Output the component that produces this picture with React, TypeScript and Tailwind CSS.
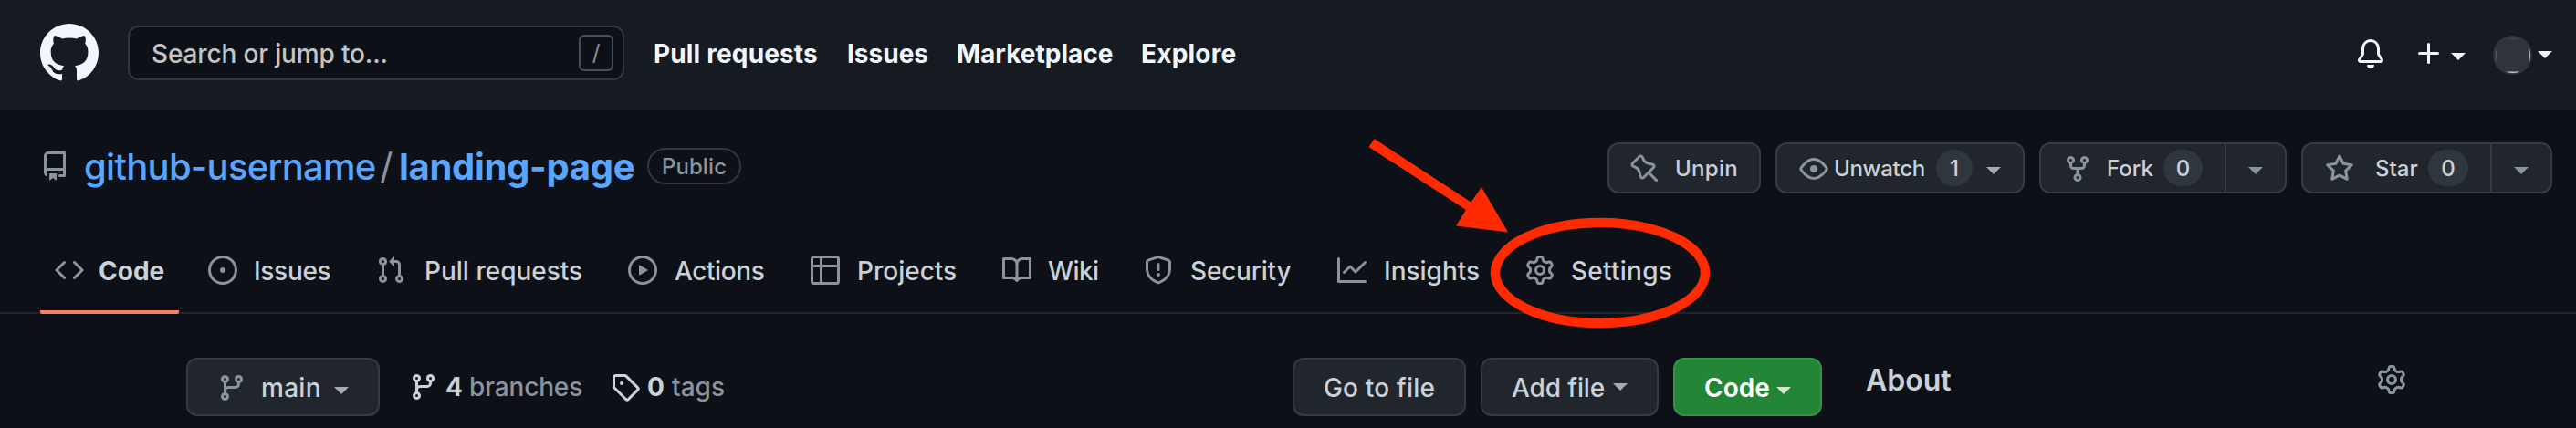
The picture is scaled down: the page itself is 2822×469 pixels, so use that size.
import React from "react";

const PATHS = {
  mark: "M8 0C3.58 0 0 3.58 0 8c0 3.54 2.29 6.53 5.47 7.59.4.07.55-.17.55-.38 0-.19-.01-.82-.01-1.49-2.01.37-2.53-.49-2.69-.94-.09-.23-.48-.94-.82-1.13-.28-.15-.68-.52-.01-.53.63-.01 1.08.58 1.23.82.72 1.21 1.87.87 2.33.66.07-.52.28-.87.51-1.07-1.78-.2-3.64-.89-3.64-3.95 0-.87.31-1.59.82-2.15-.08-.2-.36-1.02.08-2.12 0 0 .67-.21 2.2.82.64-.18 1.32-.27 2-.27.68 0 1.36.09 2 .27 1.53-1.04 2.2-.82 2.2-.82.44 1.1.16 1.92.08 2.12.51.56.82 1.27.82 2.15 0 3.07-1.87 3.75-3.65 3.95.29.25.54.73.54 1.48 0 1.07-.01 1.93-.01 2.2 0 .21.15.46.55.38A8.013 8.013 0 0016 8c0-4.42-3.58-8-8-8z",
  bell: "M8 16a2 2 0 001.985-1.75c.017-.137-.097-.25-.235-.25h-3.5c-.138 0-.252.113-.235.25A2 2 0 008 16zM3 5a5 5 0 0110 0v2.947c0 .05.015.098.042.139l1.703 2.555A1.518 1.518 0 0113.482 13H2.518a1.518 1.518 0 01-1.263-2.36l1.703-2.554A.25.25 0 003 7.947V5zm5-3.5A3.5 3.5 0 004.5 5v2.947c0 .346-.102.683-.294.97l-1.703 2.556a.018.018 0 00-.003.01l.001.006c0 .002.002.004.004.006a.017.017 0 00.006.004l.007.001h10.964l.007-.001a.016.016 0 00.006-.004.016.016 0 00.004-.006l.001-.007a.017.017 0 00-.003-.01l-1.703-2.554a1.75 1.75 0 01-.294-.97V5A3.5 3.5 0 008 1.5z",
  plus: "M7.75 2a.75.75 0 01.75.75V7h4.25a.75.75 0 110 1.5H8.5v4.25a.75.75 0 11-1.5 0V8.5H2.75a.75.75 0 010-1.5H7V2.75A.75.75 0 017.75 2z",
  repo: "M2 2.5A2.5 2.5 0 014.5 0h8.75a.75.75 0 01.75.75v12.5a.75.75 0 01-.75.75h-2.5a.75.75 0 110-1.5h1.75v-2h-8a1 1 0 00-.714 1.7.75.75 0 01-1.072 1.05A2.495 2.495 0 012 11.5v-9zm10.5-1V9h-8c-.356 0-.694.074-1 .208V2.5a1 1 0 011-1h8zM5 12.25v3.25a.25.25 0 00.4.2l1.45-1.087a.25.25 0 01.3 0L8.6 15.7a.25.25 0 00.4-.2v-3.25a.25.25 0 00-.25-.25h-3.5a.25.25 0 00-.25.25z",
  pin: "M4.456.734a1.75 1.75 0 012.826.504l.613 1.327a3.081 3.081 0 002.084 1.707l2.454.584c1.332.317 1.8 1.972.832 2.94L11.06 10l3.72 3.72a.75.75 0 11-1.061 1.06L10 11.06l-2.204 2.205c-.968.968-2.623.5-2.94-.832l-.584-2.454a3.081 3.081 0 00-1.707-2.084l-1.327-.613a1.75 1.75 0 01-.504-2.826L4.456.734zM5.92 1.866a.25.25 0 00-.404-.072L1.794 5.516a.25.25 0 00.072.404l1.328.613A4.582 4.582 0 015.73 9.63l.584 2.454a.25.25 0 00.42.12l5.47-5.47a.25.25 0 00-.12-.42L9.63 5.73a4.581 4.581 0 01-3.098-2.537L5.92 1.866z",
  eye: "M1.679 7.932c.412-.621 1.242-1.75 2.366-2.717C5.175 4.242 6.527 3.5 8 3.5c1.473 0 2.824.742 3.955 1.715 1.124.967 1.954 2.096 2.366 2.717a.119.119 0 010 .136c-.412.621-1.242 1.75-2.366 2.717C10.825 11.758 9.473 12.5 8 12.5c-1.473 0-2.824-.742-3.955-1.715C2.92 9.818 2.09 8.69 1.679 8.068a.119.119 0 010-.136zM8 2c-1.981 0-3.67.992-4.933 2.078C1.797 5.169.88 6.423.43 7.1a1.619 1.619 0 000 1.798c.45.678 1.367 1.932 2.637 3.024C4.329 13.008 6.019 14 8 14c1.981 0 3.67-.992 4.933-2.078 1.27-1.091 2.187-2.345 2.637-3.023a1.619 1.619 0 000-1.798c-.45-.678-1.367-1.932-2.637-3.023C11.671 2.992 9.981 2 8 2zm0 8a2 2 0 100-4 2 2 0 000 4z",
  fork: "M5 3.25a.75.75 0 11-1.5 0 .75.75 0 011.5 0zm0 2.122a2.25 2.25 0 10-1.5 0v.878A2.25 2.25 0 005.75 8.5h1.5v2.128a2.251 2.251 0 101.5 0V8.5h1.5a2.25 2.25 0 002.25-2.25v-.878a2.25 2.25 0 10-1.5 0v.878a.75.75 0 01-.75.75h-4.5A.75.75 0 015 6.25v-.878zm3.75 7.378a.75.75 0 11-1.5 0 .75.75 0 011.5 0zm3-8.75a.75.75 0 100-1.5.75.75 0 000 1.5z",
  star: "M8 .25a.75.75 0 01.673.418l1.882 3.815 4.21.612a.75.75 0 01.416 1.279l-3.046 2.97.719 4.192a.75.75 0 01-1.088.791L8 12.347l-3.766 1.98a.75.75 0 01-1.088-.79l.72-4.194L.818 6.374a.75.75 0 01.416-1.28l4.21-.611L7.327.668A.75.75 0 018 .25zm0 2.445L6.615 5.5a.75.75 0 01-.564.41l-3.097.45 2.24 2.184a.75.75 0 01.216.664l-.528 3.084 2.769-1.456a.75.75 0 01.698 0l2.77 1.456-.53-3.084a.75.75 0 01.216-.664l2.24-2.183-3.096-.45a.75.75 0 01-.564-.41L8 2.694v.001z",
  code: "M4.72 3.22a.75.75 0 011.06 1.06L2.06 8l3.72 3.72a.75.75 0 11-1.06 1.06L.47 8.53a.75.75 0 010-1.06l4.25-4.25zm6.56 0a.75.75 0 10-1.06 1.06L13.94 8l-3.72 3.72a.75.75 0 101.06 1.06l4.25-4.25a.75.75 0 000-1.06l-4.25-4.25z",
  issue: "M8 9.5a1.5 1.5 0 100-3 1.5 1.5 0 000 3zM8 0a8 8 0 100 16A8 8 0 008 0zM1.5 8a6.5 6.5 0 1113 0 6.5 6.5 0 01-13 0z",
  pull: "M7.177 3.073L9.573.677A.25.25 0 0110 .854v4.792a.25.25 0 01-.427.177L7.177 3.427a.25.25 0 010-.354zM3.75 2.5a.75.75 0 100 1.5.75.75 0 000-1.5zm-2.25.75a2.25 2.25 0 113 2.122v5.256a2.251 2.251 0 11-1.5 0V5.372A2.25 2.25 0 011.5 3.25zM11 2.5h-1V4h1a1 1 0 011 1v5.628a2.251 2.251 0 101.5 0V5A2.5 2.5 0 0011 2.5zm1 10.25a.75.75 0 111.5 0 .75.75 0 01-1.5 0zM3.75 12a.75.75 0 100 1.5.75.75 0 000-1.5z",
  play: "M1.5 8a6.5 6.5 0 1113 0 6.5 6.5 0 01-13 0zM8 0a8 8 0 100 16A8 8 0 008 0zM6.379 5.227A.25.25 0 006 5.442v5.117a.25.25 0 00.379.214l4.264-2.559a.25.25 0 000-.428L6.379 5.227z",
  table: "M0 1.75C0 .784.784 0 1.75 0h12.5C15.216 0 16 .784 16 1.75v12.5A1.75 1.75 0 0114.25 16H1.75A1.75 1.75 0 010 14.25V1.75zM1.5 6.5v7.75c0 .138.112.25.25.25H5v-8H1.5zM5 5H1.5V1.75a.25.25 0 01.25-.25H5V5zm1.5 1.5v8h7.75a.25.25 0 00.25-.25V6.5h-8zm8-1.5h-8V1.5h7.75a.25.25 0 01.25.25V5z",
  book: "M0 1.75A.75.75 0 01.75 1h4.253c1.227 0 2.317.59 3 1.501A3.744 3.744 0 0111.006 1h4.245a.75.75 0 01.75.75v10.5a.75.75 0 01-.75.75h-4.507a2.25 2.25 0 00-1.591.659l-.622.621a.75.75 0 01-1.06 0l-.622-.621A2.25 2.25 0 005.258 13H.75a.75.75 0 01-.75-.75V1.75zm8.755 3a2.25 2.25 0 012.25-2.25H14.5v9h-3.757c-.71 0-1.4.201-1.992.572l.004-7.322zm-1.504 7.324l.004-5.073-.002-2.253A2.25 2.25 0 005.003 2.5H1.5v9h3.757a3.75 3.75 0 011.994.574z",
  shield: "M7.467.133a1.75 1.75 0 011.066 0l5.25 1.68A1.75 1.75 0 0115 3.48V7c0 1.566-.32 3.182-1.303 4.682-.983 1.498-2.585 2.813-5.032 3.855a1.7 1.7 0 01-1.33 0c-2.447-1.042-4.049-2.357-5.032-3.855C1.32 10.182 1 8.566 1 7V3.48a1.75 1.75 0 011.217-1.667l5.25-1.68zm.61 1.429a.25.25 0 00-.153 0l-5.25 1.68a.25.25 0 00-.174.238V7c0 1.358.275 2.666 1.057 3.86.784 1.194 2.121 2.34 4.366 3.297a.2.2 0 00.154 0c2.245-.956 3.582-2.104 4.366-3.298C13.225 9.666 13.5 8.36 13.5 7V3.48a.25.25 0 00-.174-.237l-5.25-1.68zM9 10.5a1 1 0 11-2 0 1 1 0 012 0zm-.25-5.75a.75.75 0 10-1.5 0v3a.75.75 0 001.5 0v-3z",
  graph: "M1.5 1.75a.75.75 0 00-1.5 0v12.5c0 .414.336.75.75.75h14.5a.75.75 0 000-1.5H1.5V1.75zm14.28 2.53a.75.75 0 00-1.06-1.06L10 7.94 7.53 5.47a.75.75 0 00-1.06 0L3.22 8.72a.75.75 0 001.06 1.06L7 7.06l2.47 2.47a.75.75 0 001.06 0l5.25-5.25z",
  gear: "M7.429 1.525a6.593 6.593 0 011.142 0c.036.003.108.036.137.146l.289 1.105c.147.56.55.967.997 1.189.174.086.341.183.501.29.417.278.97.423 1.53.27l1.102-.303c.11-.03.175.016.195.046.219.31.41.641.573.989.014.031.022.11-.059.19l-.815.806c-.411.406-.562.957-.53 1.456a4.588 4.588 0 010 .582c-.032.499.119 1.05.53 1.456l.815.806c.08.08.073.159.059.19a6.494 6.494 0 01-.573.99c-.02.029-.086.074-.195.045l-1.103-.303c-.559-.153-1.112-.008-1.529.27-.16.107-.327.204-.5.29-.449.222-.851.628-.998 1.189l-.289 1.105c-.029.11-.101.143-.137.146a6.613 6.613 0 01-1.142 0c-.036-.003-.108-.037-.137-.146l-.289-1.105c-.147-.56-.55-.967-.997-1.189a4.502 4.502 0 01-.501-.29c-.417-.278-.97-.423-1.53-.27l-1.102.303c-.11.03-.175-.016-.195-.046a6.492 6.492 0 01-.573-.989c-.014-.031-.022-.11.059-.19l.815-.806c.411-.406.562-.957.53-1.456a4.587 4.587 0 010-.582c.032-.499-.119-1.05-.53-1.456l-.815-.806c-.08-.08-.073-.159-.059-.19a6.44 6.44 0 01.573-.99c.02-.029.086-.075.195-.045l1.103.303c.559.153 1.112.008 1.529-.27.16-.107.327-.204.5-.29.449-.222.851-.628.998-1.189l.289-1.105c.029-.11.101-.143.137-.146zM8 0c-.236 0-.47.01-.701.03-.743.065-1.29.615-1.458 1.261l-.29 1.106c-.017.066-.078.158-.211.224a5.994 5.994 0 00-.668.386c-.123.082-.233.09-.3.071L3.27 2.776c-.644-.177-1.392.02-1.82.63a7.977 7.977 0 00-.704 1.217c-.315.675-.111 1.422.363 1.891l.815.806c.05.048.098.147.088.294a6.084 6.084 0 000 .772c.01.147-.038.246-.088.294l-.815.806c-.474.469-.678 1.216-.363 1.891.2.428.436.835.704 1.218.428.609 1.176.806 1.82.63l1.103-.303c.066-.019.176-.011.299.071.213.143.436.272.668.386.133.066.194.158.212.224l.289 1.106c.169.646.715 1.196 1.458 1.26a8.094 8.094 0 001.402 0c.743-.064 1.29-.614 1.458-1.26l.29-1.106c.017-.066.078-.158.211-.224a5.98 5.98 0 00.668-.386c.123-.082.233-.09.3-.071l1.102.302c.644.177 1.392-.02 1.82-.63.268-.382.505-.789.704-1.217.315-.675.111-1.422-.364-1.891l-.814-.806c-.05-.048-.098-.147-.088-.294a6.1 6.1 0 000-.772c-.01-.147.039-.246.088-.294l.814-.806c.475-.469.679-1.216.364-1.891a7.992 7.992 0 00-.704-1.218c-.428-.609-1.176-.806-1.82-.63l-1.103.303c-.066.019-.176.011-.299-.071a5.991 5.991 0 00-.668-.386c-.133-.066-.194-.158-.212-.224L10.16 1.29C9.99.645 9.444.095 8.701.031A8.094 8.094 0 008 0zm1.5 8a1.5 1.5 0 11-3 0 1.5 1.5 0 013 0zM11 8a3 3 0 11-6 0 3 3 0 016 0z",
  branch: "M11.75 2.5a.75.75 0 100 1.5.75.75 0 000-1.5zm-2.25.75a2.25 2.25 0 113 2.122V6A2.5 2.5 0 0110 8.5H6a1 1 0 00-1 1v1.128a2.251 2.251 0 11-1.5 0V5.372a2.25 2.25 0 111.5 0v1.836A2.492 2.492 0 016 7h4a1 1 0 001-1v-.628A2.25 2.25 0 019.5 3.25zM4.25 12a.75.75 0 100 1.5.75.75 0 000-1.5zM3.5 3.25a.75.75 0 111.5 0 .75.75 0 01-1.5 0z",
  tag: "M2.5 7.775V2.75a.25.25 0 01.25-.25h5.025a.25.25 0 01.177.073l6.25 6.25a.25.25 0 010 .354l-5.025 5.025a.25.25 0 01-.354 0l-6.25-6.25a.25.25 0 01-.073-.177zm-1.5 0V2.75C1 1.784 1.784 1 2.75 1h5.025c.464 0 .91.184 1.238.513l6.25 6.25a1.75 1.75 0 010 2.474l-5.026 5.026a1.75 1.75 0 01-2.474 0l-6.25-6.25A1.75 1.75 0 011 7.775zM6 5a1 1 0 100 2 1 1 0 000-2z",
};

type IconName = keyof typeof PATHS;

function Icon({ name, className = "" }: { name: IconName; className?: string }) {
  return (
    <svg viewBox="0 0 16 16" fill="currentColor" className={`shrink-0 ${name === "mark" ? "size-16" : "size-8"} ${className}`}>
      <path fillRule="evenodd" clipRule="evenodd" d={PATHS[name]} />
    </svg>
  );
}

function Caret({ className = "" }: { className?: string }) {
  return (
    <svg viewBox="0 0 16 8" fill="currentColor" className={`h-2 w-4 shrink-0 ${className}`}>
      <path d="M0 0h16L8 8z" />
    </svg>
  );
}

function Button({ className = "", children }: { className?: string; children: React.ReactNode }) {
  return (
    <button className={`flex shrink-0 items-center rounded-xl border-2 border-[#363b42] bg-[#21262d] font-[550] whitespace-nowrap text-[#c9d1d9] ${className}`}>
      {children}
    </button>
  );
}

function Counter({ className = "", children }: { className?: string; children: React.ReactNode }) {
  return (
    <span className={`flex h-10 shrink-0 items-center justify-center rounded-full bg-[#30363d] pt-0.5 ${className}`}>{children}</span>
  );
}

function Header() {
  return (
    <header className="flex h-[120px] items-center bg-[#161b22] pb-1 pl-11 text-[28px] leading-10">
      <Icon name="mark" className="text-[#f0f6fc]" />
      <div className="ml-8 flex h-[60px] w-[544px] items-center justify-between rounded-xl border-2 border-[#30363d] bg-[#0d1117] pr-2.5 pl-6">
        <span className="pt-0.5 font-[450] tracking-[-0.15px] text-[#c4c4c4]">Search or jump to...</span>
        <span className="flex h-10 w-[38px] items-center justify-center rounded-md border-2 border-[#484f58] text-2xl leading-none text-[#8b8e92]">
          /
        </span>
      </div>
      <nav className="flex pt-0.5 pl-8 font-[650] whitespace-nowrap text-[#f0f6fc]">
        <span className="w-[212px] tracking-[0.15px]">Pull requests</span>
        <span className="w-[120px]">Issues</span>
        <span className="w-[202px]">Marketplace</span>
        <span className="tracking-[0.2px]">Explore</span>
      </nav>
      <div className="mr-[26px] ml-auto flex items-center pt-0.5 text-[#f0f6fc]">
        <Icon name="bell" />
        <Icon name="plus" className="ml-8" />
        <Caret className="mt-1.5 ml-2" />
        <span className="mt-0.5 ml-[30px] flex size-[43px] items-center justify-center rounded-full bg-[#30343a]">
          <svg viewBox="0 0 43 43" className="size-full" fill="none">
            <path d="M14 3.5Q21.500 2 29 3.500z" fill="#5a5a5a" />
            <path d="M14 39.500h16Q22 42.500 14 39.500z" fill="#c8c8c4" />
            <path d="M39.500 13.500v16.500Q42.500 21.500 39.500 13.500z" fill="#c8c8c4" />
            <path d="M4 14v16Q2 21.500 4 14z" fill="#666" />
          </svg>
        </span>
        <Caret className="mt-0.5 ml-1.5" />
      </div>
    </header>
  );
}

function RepoBar() {
  return (
    <div className="flex h-[92px] items-start pt-9 pr-[26px] pl-11">
      <div className="flex h-[52px] items-center whitespace-nowrap">
        <Icon name="repo" className="text-[#8b949e]" />
        <h1 className="flex pt-px pl-4 text-[40px] leading-[52px] text-[#58a6ff]">
          <span className="w-[324px] font-[450] tracking-[-0.75px]">github-username</span>
          <span className="w-[21px] text-[#8b949e]">/</span>
          <span className="w-[272px] font-[650] tracking-[-0.3px]">landing-page</span>
        </h1>
        <span className="flex h-10 w-[103px] items-center justify-center rounded-full border-2 border-[#30363d] pt-px text-2xl leading-9 font-[550] tracking-[0.1px] text-[#8b949e]">
          Public
        </span>
      </div>
      <div className="ml-auto flex text-2xl leading-10">
        <Button className="h-14 w-[168px] pl-[23px]">
          <Icon name="pin" className="mt-0.5 text-[#8b949e]" />
          <span className="ml-[17px] pt-0.5 tracking-[0.3px]">Unpin</span>
        </Button>
        <Button className="ml-4 h-14 w-[273px] pl-6">
          <Icon name="eye" className="mt-0.5 text-[#8b949e]" />
          <span className="ml-[6px] w-[112px] pt-0.5 text-left tracking-[-0.3px]">Unwatch</span>
          <Counter className="w-10">1</Counter>
          <Caret className="mt-1.5 ml-[15px] text-[#a7abb1]" />
        </Button>
        <Button className="ml-4 h-14 w-[271px] pl-6">
          <Icon name="fork" className="mt-0.5 text-[#8b949e]" />
          <span className="ml-4 w-[62px] pt-0.5 text-left">Fork</span>
          <Counter className="w-[43px]">0</Counter>
          <span className="ml-6 flex h-full grow items-center border-l-2 border-[#363b42] pl-6 text-[#8b949e]">
            <Caret className="mt-1.5" />
          </span>
        </Button>
        <Button className="ml-4 h-14 w-[275px] pl-6">
          <Icon name="star" className="mt-0.5 text-[#8b949e]" />
          <span className="ml-[23px] w-[58px] pt-0.5 text-left">Star</span>
          <Counter className="w-[44px]">0</Counter>
          <span className="ml-6 flex h-full grow items-center border-l-2 border-[#363b42] pl-6 text-[#8b949e]">
            <Caret className="mt-1.5" />
          </span>
        </Button>
      </div>
    </div>
  );
}

const TABS: { icon: IconName; label: string; width: string; text: string }[] = [
  { icon: "code", label: "Code", width: "w-[152px]", text: "pl-4 font-[650]" },
  { icon: "issue", label: "Issues", width: "ml-4 w-[184px]", text: "pl-[18px] tracking-[-0.3px]" },
  { icon: "pull", label: "Pull requests", width: "w-[276px]", text: "pl-[21px]" },
  { icon: "play", label: "Actions", width: "w-[200px]", text: "pl-[19px] tracking-[-0.4px]" },
  { icon: "table", label: "Projects", width: "w-[210px]", text: "pl-[19px]" },
  { icon: "book", label: "Wiki", width: "w-[155px]", text: "pl-[18px] tracking-[-0.6px]" },
  { icon: "shield", label: "Security", width: "w-[212px]", text: "pl-[19px] tracking-[-0.2px]" },
  { icon: "graph", label: "Insights", width: "w-[206px]", text: "pl-[19px]" },
  { icon: "gear", label: "Settings", width: "w-[192px]", text: "pl-[18px] tracking-[0.25px]" },
];

function Tabs() {
  return (
    <nav className="flex h-[132px] items-end pl-11 text-[28px] leading-10 font-[450] whitespace-nowrap text-[#c9d1d9] shadow-[inset_0_-2px_0_#21262d]">
      {TABS.map((tab, i) => (
        <a
          key={tab.label}
          className={`flex h-24 shrink-0 items-center rounded-xs border-b-4 pt-1 pl-4 ${i === 0 ? "border-[#f78166]" : "border-transparent"} ${tab.width}`}
        >
          <Icon name={tab.icon} className="text-[#8b949e]" />
          <span className={`pt-0.5 ${tab.text}`}>{tab.label}</span>
        </a>
      ))}
    </nav>
  );
}

function FileBar() {
  return (
    <section className="flex h-[125px] items-start pt-12 pl-[204px] text-[28px] leading-10 whitespace-nowrap">
      <Button className="h-16 w-[212px] pl-8">
        <Icon name="branch" className="mt-0.5 text-[#8b949e]" />
        <span className="ml-4 w-20 pt-0.5 text-left tracking-[0.3px]">main</span>
        <Caret className="mt-2 text-[#a7abb1]" />
      </Button>
      <div className="ml-8 flex h-16 w-[968px] items-center text-[#8b949e]">
        <Icon name="branch" className="text-[#c9d1d9]" />
        <span className="ml-2 w-[26px] font-[650] text-[#c9d1d9]">4</span>
        <span className="w-[155px] font-[450] tracking-[-0.15px]">branches</span>
        <Icon name="tag" className="text-[#c9d1d9]" />
        <span className="ml-2 w-[27px] font-[650] text-[#c9d1d9]">0</span>
        <span className="font-[450]">tags</span>
      </div>
      <Button className="h-16 w-[190px] justify-center pt-0.5 tracking-[0.2px]">Go to file</Button>
      <Button className="ml-4 h-16 w-[195px] pl-8">
        <span className="w-[111px] pt-0.5 text-left tracking-[-0.1px]">Add file</span>
        <Caret className="text-[#a7abb1]" />
      </Button>
      <button className="ml-4 flex h-16 w-[163px] items-center rounded-xl border-2 border-[#389148] bg-[#238636] pl-8 font-semibold text-white">
        <span className="w-[79px] pt-0.5 text-left">Code</span>
        <Caret className="mt-2 text-[#d3e7d7]" />
      </button>
      <div className="ml-12 flex h-12 w-[592px] items-center justify-between">
        <h2 className="pt-0.5 text-[32px] font-semibold text-[#c9d1d9]">About</h2>
        <Icon name="gear" className="text-[#8b949e]" />
      </div>
    </section>
  );
}

function Annotation() {
  return (
    <svg viewBox="0 0 2822 469" className="pointer-events-none absolute inset-0 h-[469px] w-[2822px]" fill="none">
      <ellipse cx="1753" cy="299" rx="115" ry="55" stroke="#ff2a00" strokeWidth="10.500" />
      <path d="M1505.500 152L1611.500 221.500L1623 205L1652 254.500L1595 247.500L1606 230L1499.500 161z" fill="#ff2a00" />
    </svg>
  );
}

export default function App() {
  return (
    <div className="relative h-[469px] w-[2822px] overflow-hidden bg-[#0d1117] font-['Inter',sans-serif]">
      <Header />
      <RepoBar />
      <Tabs />
      <FileBar />
      <Annotation />
    </div>
  );
}
